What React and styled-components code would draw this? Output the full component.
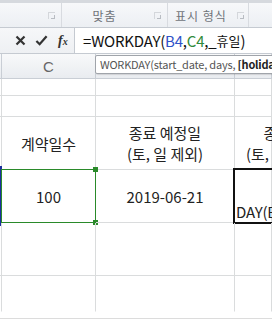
import React from "react";
import styled, { createGlobalStyle } from "styled-components";

const GlobalStyle = createGlobalStyle`
  html, body {
    margin: 0;
    padding: 0;
    background: #ffffff;
  }
  body {
    font-family: "Noto Sans CJK KR", "Noto Sans", sans-serif;
  }
`;

const GRID = "#dadcdd";
const RANGE_GREEN = "#2a8a2a";
const RANGE_BLUE = "#1c2f9e";

const Frame = styled.div`
  width: 272px;
  height: 320px;
  overflow: hidden;
  position: relative;
  background: #fff;
  display: flex;
  flex-direction: column;
`;

const RibbonEdge = styled.div`
  height: 3px;
  background: #d6d9de;
`;

const RibbonLabels = styled.div`
  height: 24px;
  display: flex;
  background: linear-gradient(#f7f8fa, #eceff3);
  border-bottom: 1px solid #c5cad1;
`;

const Group = styled.div`
  width: ${(p) => p.$w}px;
  flex-shrink: 0;
  box-sizing: border-box;
  padding-right: ${(p) => p.$pr}px;
  display: flex;
  align-items: center;
  justify-content: center;
  position: relative;
  border-right: 1px solid #d8dbe0;
  font-size: 12px;
  color: #70747a;
  letter-spacing: 1px;
`;

const Launcher = styled.span`
  position: absolute;
  right: ${(p) => p.$r}px;
  top: 9px;
  width: 6px;
  height: 6px;
  border-top: 1px solid #d4d7db;
  border-left: 1px solid #d4d7db;
  &::after {
    content: "";
    position: absolute;
    right: 0;
    bottom: 0;
    width: 3px;
    height: 3px;
    border-right: 1px solid #b8bcc2;
    border-bottom: 1px solid #b8bcc2;
  }
`;

const FormulaBar = styled.div`
  height: 25px;
  display: flex;
  border-bottom: 1px solid #c5cad1;
`;

const ButtonArea = styled.div`
  width: 75px;
  flex-shrink: 0;
  display: flex;
  align-items: center;
  background: linear-gradient(#f6f7f9, #eef0f3);
  border-right: 1px solid #c5cad1;
  padding-left: 14px;
  box-sizing: border-box;
  gap: 8px;
`;

const IconBtn = styled.span`
  width: 13px;
  height: 13px;
  display: flex;
  align-items: center;
  justify-content: center;
`;

const Fx = styled.span`
  font-family: "Liberation Serif", serif;
  font-style: italic;
  font-weight: bold;
  font-size: 14px;
  color: #333;
  margin-left: 2px;
  & > small {
    font-size: 10px;
  }
`;

const FormulaInput = styled.div`
  flex: 1;
  background: #fff;
  display: flex;
  align-items: center;
  padding-left: 8px;
  font-size: 15px;
  letter-spacing: -0.2px;
  color: #111;
  white-space: nowrap;
  overflow: hidden;
`;

const Ref = styled.span`
  color: ${(p) => p.$c};
`;

const Hangul = styled.span`
  font-size: 13px;
  letter-spacing: 0;
`;

const Row = styled.div`
  height: ${(p) => p.$h}px;
  display: flex;
  flex-shrink: 0;
`;

const Cell = styled.div`
  width: ${(p) => (p.$w ? `${p.$w}px` : "auto")};
  flex: ${(p) => (p.$w ? "0 0 auto" : "1")};
  box-sizing: border-box;
  border-right: 1px solid ${GRID};
  border-bottom: 1px solid ${(p) => (p.$noBottom ? "transparent" : GRID)};
  position: relative;
  display: flex;
  flex-direction: column;
  align-items: center;
  justify-content: center;
  font-size: 15px;
  color: #222;
  line-height: 21px;
  white-space: nowrap;
`;

const HeadCell = styled(Cell)`
  background: linear-gradient(#f8f9fa, #e9ecf0);
  border-right-color: #c9ced5;
  border-bottom-color: #c9ced5;
  color: #666;
  font-family: "Liberation Sans", sans-serif;
  font-size: 15px;
`;

const Overflow = styled.div`
  position: absolute;
  left: 11px;
  top: 0;
  bottom: 0;
  display: flex;
  flex-direction: column;
  align-items: center;
  justify-content: center;
  font-size: 15px;
  line-height: 21px;
  color: #222;
`;

const RangeBox = styled.div`
  position: absolute;
  left: -1px;
  top: -1px;
  right: -1px;
  bottom: -1px;
  border: 1px solid ${RANGE_GREEN};
  pointer-events: none;
`;

const Handle = styled.span`
  position: absolute;
  width: 5px;
  height: 5px;
  background: ${(p) => p.$c};
  ${(p) => (p.$top ? "top: -3px;" : "bottom: -3px;")}
  ${(p) => (p.$left ? "left: -3px;" : "right: -3px;")}
`;

const BlueEdge = styled.div`
  position: absolute;
  left: 0;
  top: -1px;
  bottom: -1px;
  width: 2px;
  background: ${RANGE_BLUE};
`;

const ActiveCell = styled.div`
  position: absolute;
  left: -2px;
  top: -2px;
  right: -4px;
  bottom: -2px;
  border: 2px solid #111;
  overflow: hidden;
  display: flex;
  align-items: flex-end;
  padding-left: 1px;
  font-size: 15px;
  line-height: 20px;
  letter-spacing: -0.2px;
  color: #222;
  white-space: nowrap;
`;

const Tooltip = styled.div`
  position: absolute;
  left: 95px;
  top: 55px;
  height: 17px;
  padding: 0 4px;
  background: #fff;
  border: 1px solid #a0a4aa;
  border-radius: 2px;
  box-shadow: 1px 1px 1px rgba(0, 0, 0, 0.12);
  font-size: 11px;
  letter-spacing: -0.2px;
  line-height: 17px;
  color: #555;
  white-space: nowrap;
  & b {
    font-weight: bold;
    color: #222;
  }
`;

const BottomRule = styled.div`
  position: absolute;
  left: 0;
  right: 0;
  top: 318px;
  height: 1px;
  background: #dcdcdc;
`;

const Check = () => (
  <svg width="14" height="13" viewBox="0 0 14 13">
    <path d="M1.5 7 L5 10.5 L12.5 2" fill="none" stroke="#333" strokeWidth="2.4" />
  </svg>
);

const Cross = () => (
  <svg width="11" height="11" viewBox="0 0 11 11">
    <path d="M1.5 1.5 L9.5 9.5 M9.5 1.5 L1.5 9.5" stroke="#333" strokeWidth="2.2" />
  </svg>
);

const cols = [2, 94, 139, 0];

function GridRow({ h, children, last }) {
  return (
    <Row $h={h}>
      {cols.map((w, i) => (
        <Cell key={i} $w={w} $noBottom={last}>
          {children && children[i]}
        </Cell>
      ))}
    </Row>
  );
}

export default function App() {
  return (
    <Frame>
      <GlobalStyle />
      <RibbonEdge />
      <RibbonLabels>
        <Group $w={62} $pr={20}>
          <Launcher $r={6} />
        </Group>
        <Group $w={106} $pr={20}>
          맞춤
          <Launcher $r={6} />
        </Group>
        <Group $w={81} $pr={14}>
          표시 형식
          <Launcher $r={4} />
        </Group>
      </RibbonLabels>
      <FormulaBar>
        <ButtonArea>
          <IconBtn>
            <Cross />
          </IconBtn>
          <IconBtn>
            <Check />
          </IconBtn>
          <Fx>
            f<small>x</small>
          </Fx>
        </ButtonArea>
        <FormulaInput>
          =WORKDAY(<Ref $c="#2f52c8">B4</Ref>,<Ref $c="#2f8a3a">C4</Ref>,_
          <Hangul>휴일</Hangul>)
        </FormulaInput>
      </FormulaBar>
      <Row $h={25}>
        <HeadCell $w={2} />
        <HeadCell $w={94}>C</HeadCell>
        <HeadCell $w={139} />
        <HeadCell />
      </Row>
      <GridRow h={17} />
      <GridRow h={21} />
      <GridRow h={53}>
        {[
          null,
          "계약일수",
          <>
            <div>종료 예정일</div>
            <div>(토, 일 제외)</div>
          </>,
          <Overflow>
            <div>종료일</div>
            <div>(토, 일 제외)</div>
          </Overflow>,
        ]}
      </GridRow>
      <GridRow h={53}>
        {[
          <BlueEdge>
            <Handle $c={RANGE_BLUE} $top $left />
            <Handle $c={RANGE_BLUE} $left />
          </BlueEdge>,
          <>
            100
            <RangeBox>
              <Handle $c={RANGE_GREEN} $top />
              <Handle $c={RANGE_GREEN} />
            </RangeBox>
          </>,
          "2019-06-21",
          <ActiveCell>DAY(B4,C4,_휴일)</ActiveCell>,
        ]}
      </GridRow>
      <GridRow h={53} />
      <GridRow h={36} last />
      <Tooltip>
        WORKDAY(start_date, days, <b>[holidays]</b>)
      </Tooltip>
      <BottomRule />
    </Frame>
  );
}
